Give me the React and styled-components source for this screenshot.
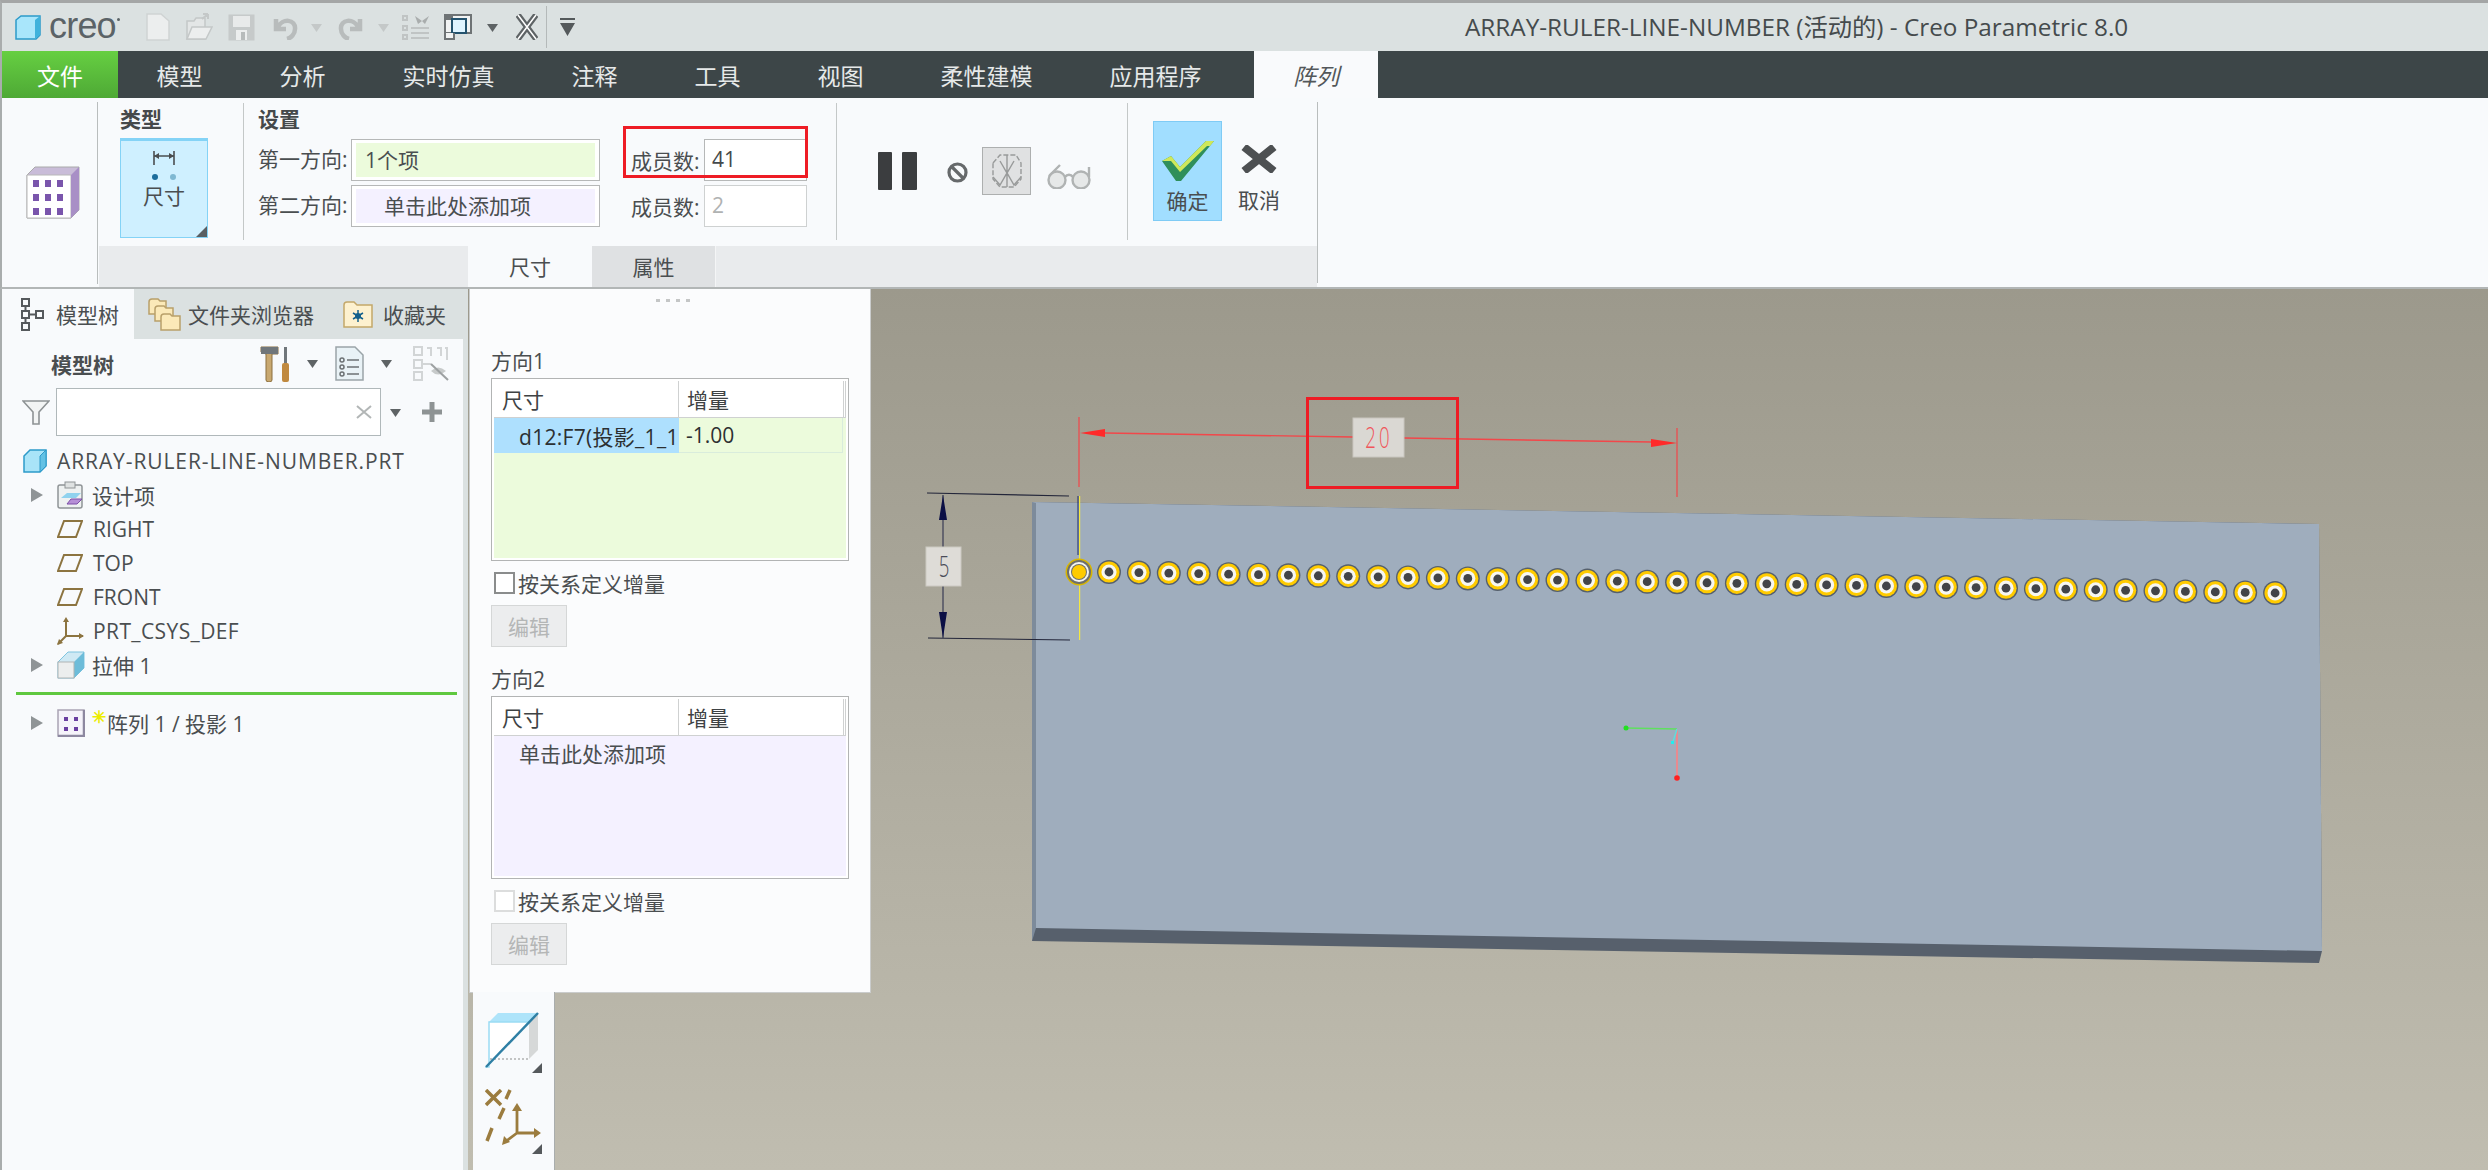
import React from 'react'
import styled, { createGlobalStyle } from 'styled-components'

const FONT = `"Open Sans", "Noto Sans CJK SC", sans-serif`

const GlobalStyle = createGlobalStyle`
  html, body {
    margin: 0;
    padding: 0;
    background: #f7f9fb;
  }
  * {
    box-sizing: border-box;
  }
`

const Page = styled.div`
  width: 2488px;
  height: 1170px;
  overflow: hidden;
  display: flex;
  flex-direction: column;
  font-family: ${FONT};
  color: #4a4e50;
`

/* Barre de titre */
const TitleBar = styled.div`
  height: 51px;
  flex: none;
  display: flex;
  align-items: center;
  background: #dbe1e1;
  border-top: 3px solid #a4a6a6;
  border-left: 2px solid #a9adad;
  position: relative;
`

const Logo = styled.div`
  display: flex;
  align-items: center;
  margin-left: 13px;
  width: 128px;
  flex: none;
`

const LogoText = styled.span`
  font-family: 'Liberation Sans', sans-serif;
  font-size: 36px;
  letter-spacing: -0.8px;
  line-height: 1;
  margin-left: 8px;
  margin-top: -3px;
  color: #5b6367;
`

const LogoMark = styled.span`
  width: 3px;
  height: 3px;
  margin: -16px 0 0 1px;
  border-radius: 50%;
  background: #5b6367;
  flex: none;
`

const QatIcon = styled.svg`
  flex: none;
  margin-left: ${(p) => p.$gap}px;
`

const QatDivider = styled.div`
  width: 1px;
  height: 42px;
  margin-left: 8px;
  background: #b4b9b9;
  flex: none;
`

const WindowTitle = styled.div`
  position: absolute;
  left: 1463px;
  top: 6px;
  font-size: 24.3px;
  line-height: 36px;
  white-space: nowrap;
  color: #454b4d;
`

/* Menu principal */
const MenuBar = styled.div`
  height: 47px;
  flex: none;
  display: flex;
  background: #3d4648;
  border-left: 2px solid #a9adad;
`

const FileTab = styled.div`
  width: 116px;
  display: flex;
  align-items: center;
  justify-content: center;
  font-size: 23px;
  color: #fff;
  background: linear-gradient(#66cf42, #4ea935);
`

const MenuItem = styled.div`
  padding: 0 38.5px;
  display: flex;
  align-items: center;
  font-size: 23px;
  color: #e6e9e9;
`

const ActiveMenuItem = styled.div`
  width: 124px;
  margin-left: 14px;
  display: flex;
  align-items: center;
  justify-content: center;
  font-size: 23px;
  font-style: italic;
  color: #53575a;
  background: #f9fafc;
`

/* Ruban */
const Ribbon = styled.div`
  height: 191px;
  flex: none;
  display: flex;
  position: relative;
  background: #f8fafc;
  border-left: 2px solid #a9adad;
  border-bottom: 2px solid #b2b6b6;
`

const RibbonIconCell = styled.div`
  width: 97px;
  flex: none;
  display: flex;
  align-items: center;
  justify-content: center;
  padding-left: 4px;
  position: relative;
  &::after {
    content: '';
    position: absolute;
    right: 1px;
    top: 4px;
    bottom: 3px;
    width: 1px;
    background: #b9bdbd;
  }
`

const RibbonBody = styled.div`
  width: 1219px;
  flex: none;
  display: flex;
  flex-direction: column;
  position: relative;
  &::after {
    content: '';
    position: absolute;
    right: 0;
    top: 4px;
    bottom: 4px;
    width: 1px;
    background: #b9bdbd;
  }
`

const RibbonGroups = styled.div`
  height: 148px;
  display: flex;
`

const RibbonGroup = styled.div`
  width: ${(p) => p.$width}px;
  flex: none;
  padding: 9px 0 0 ${(p) => p.$pad}px;
  position: relative;
  display: ${(p) => (p.$row ? 'flex' : 'block')};
  &::after {
    content: '';
    display: ${(p) => (p.$noLine ? 'none' : 'block')};
    position: absolute;
    right: 0;
    top: 5px;
    bottom: 6px;
    width: 1px;
    background: #c4c8c8;
  }
`

const GroupTitle = styled.div`
  font-size: 21px;
  font-weight: 700;
  line-height: 24px;
  margin-bottom: 8px;
  color: #45494b;
`

const TypeButton = styled.div`
  width: 88px;
  height: 100px;
  margin-top: -1px;
  background: #cff0ff;
  border: 1px solid #84d3f6;
  border-top: 3px solid #84d3f6;
  position: relative;
  display: flex;
  flex-direction: column;
  align-items: center;
  padding-top: 7px;
  font-size: 21px;
  line-height: 24px;
  &::after {
    content: '';
    position: absolute;
    right: 0;
    bottom: 0;
    border-style: solid;
    border-width: 0 0 11px 11px;
    border-color: transparent transparent #5a5f62 transparent;
  }
`

const SettingsGrid = styled.div`
  display: grid;
  grid-template-columns: 93px 249px 31px 73px 103px;
  grid-template-rows: 42px 42px;
  row-gap: 4px;
  align-items: center;
`

const FieldLabel = styled.div`
  font-size: 21px;
  line-height: 28px;
  padding-bottom: 2px;
  white-space: nowrap;
  grid-column: ${(p) => p.$col};
  margin-top: ${(p) => (p.$col === 4 ? 3 : 0)}px;
`

const ColorField = styled.div`
  grid-column: 2;
  width: 249px;
  height: 42px;
  padding: 3px 4px;
  background: #fff;
  border: 1px solid #b6b8b8;
`

const ColorFieldInner = styled.div`
  height: 100%;
  padding-left: ${(p) => p.$pad}px;
  padding-bottom: 2px;
  display: flex;
  align-items: center;
  font-size: 21px;
  background: ${(p) => p.$bg};
`

const CountField = styled.div`
  grid-column: 5;
  width: 103px;
  height: 42px;
  padding-left: 7px;
  padding-bottom: 2px;
  display: flex;
  align-items: center;
  font-size: 21px;
  background: #fff;
  color: ${(p) => (p.$disabled ? '#b0b2b2' : '#45494b')};
  border: 1px solid ${(p) => (p.$disabled ? '#ced1d1' : '#b6b8b8')};
`

const ToggleButton = styled.div`
  width: 49px;
  height: 48px;
  margin-top: 40px;
  margin-left: 14px;
  background: #e0e1e2;
  border: 1px solid #adafaf;
  display: flex;
  align-items: center;
  justify-content: center;
  flex: none;
`

const ActionIcon = styled.svg`
  flex: none;
  margin-top: ${(p) => p.$top}px;
  margin-left: ${(p) => p.$left}px;
`

const ConfirmButton = styled.div`
  width: ${(p) => p.$width}px;
  height: 100px;
  margin-top: 14px;
  margin-left: ${(p) => p.$left}px;
  background: ${(p) => (p.$active ? '#a1deff' : 'transparent')};
  border: 1px solid ${(p) => (p.$active ? '#7fcbf5' : 'transparent')};
  display: flex;
  flex-direction: column;
  align-items: center;
  font-size: 21px;
  line-height: 26px;
  flex: none;
`

const ConfirmIcon = styled.svg`
  margin-top: ${(p) => p.$top}px;
  margin-bottom: ${(p) => p.$bottom}px;
  flex: none;
`

const RibbonTabs = styled.div`
  height: 41px;
  margin-right: 1px;
  padding-left: 369px;
  display: flex;
  background: #e9ebed;
`

const RibbonTab = styled.div`
  width: 124px;
  padding-bottom: 2px;
  display: flex;
  align-items: center;
  justify-content: center;
  font-size: 21px;
  background: ${(p) => (p.$active ? '#f8fafc' : '#dfe1e3')};
  border-right: ${(p) => (p.$active ? 'none' : '1px solid #f4f5f6')};
`

const Highlight = styled.div`
  position: absolute;
  left: 621px;
  top: 28px;
  width: 185px;
  height: 52px;
  border: 3px solid #ee1c25;
  pointer-events: none;
`

/* Espace de travail */
const Workspace = styled.div`
  flex: 1;
  display: flex;
  position: relative;
  min-height: 0;
`

const Sidebar = styled.div`
  width: 463px;
  flex: none;
  display: flex;
  flex-direction: column;
  background: #f8fafc;
  border-left: 2px solid #a9adad;
`

const SideTabs = styled.div`
  height: 50px;
  flex: none;
  display: flex;
  align-items: center;
  background: #dbe1e1;
`

const SideTab = styled.div`
  height: 100%;
  width: ${(p) => p.$width}px;
  flex: none;
  display: flex;
  align-items: center;
  padding-left: ${(p) => p.$pad}px;
  gap: ${(p) => p.$gap}px;
  font-size: 21px;
  background: ${(p) => (p.$active ? '#f8fafc' : 'transparent')};
`

const TreeHeader = styled.div`
  height: 49px;
  flex: none;
  display: flex;
  align-items: center;
  padding-left: 49px;
`

const TreeTitle = styled.div`
  width: 209px;
  font-size: 21px;
  font-weight: 700;
  flex: none;
`

const HeaderIcon = styled.svg`
  flex: none;
  margin-left: ${(p) => p.$left}px;
`

const FilterRow = styled.div`
  height: 48px;
  flex: none;
  display: flex;
  align-items: center;
  padding-left: 20px;
`

const FilterInput = styled.div`
  width: 325px;
  height: 48px;
  margin-left: 6px;
  padding-right: 8px;
  display: flex;
  align-items: center;
  justify-content: flex-end;
  background: #fff;
  border: 1px solid #b0b8ba;
  flex: none;
`

const TreeList = styled.div`
  padding-top: 8px;
  display: flex;
  flex-direction: column;
`

const TreeRow = styled.div`
  height: 34px;
  display: flex;
  align-items: center;
  padding-left: ${(p) => p.$indent}px;
  font-size: 21px;
  letter-spacing: ${(p) => p.$spacing || 0}px;
  white-space: nowrap;
`

const TreeArrow = styled.div`
  width: 0;
  height: 0;
  flex: none;
  border-style: solid;
  border-width: 7px 0 7px 12px;
  border-color: transparent transparent transparent #8f9496;
  margin-right: 14px;
`

const TreeIcon = styled.svg`
  flex: none;
  margin-right: ${(p) => p.$gap}px;
`

const NewMark = styled.span`
  color: #ecec00;
  font-size: 17px;
  font-weight: 700;
  width: 15px;
  margin-top: -14px;
  flex: none;
`

const InsertLine = styled.div`
  height: 3px;
  margin: 10px 6px 11px 14px;
  flex: none;
  background: #5fc83f;
`

const Gutter = styled.div`
  width: 5px;
  flex: none;
  background: #dbe1e1;
`

const Canvas = styled.div`
  flex: 1;
  position: relative;
  overflow: hidden;
  background: linear-gradient(#9c998c, #c0bdb0);
`

const Scene = styled.svg`
  display: block;
  width: 2020px;
  height: 881px;
`

const SceneText = styled.text`
  font-family: 'Open Sans', sans-serif;
  font-size: 30px;
  font-weight: 300;
  text-anchor: middle;
`

/* Panneau déroulant */
const Popup = styled.div`
  position: absolute;
  left: 1px;
  top: 0;
  width: 402px;
  height: 704px;
  padding: 62px 0 0 21px;
  background: #fbfcfd;
  border: 1px solid #cacccc;
  border-top: none;
`

const Grip = styled.div`
  position: absolute;
  left: 186px;
  top: 10px;
  display: flex;
  gap: 6px;
`

const GripDot = styled.span`
  width: 4px;
  height: 3px;
  background: #c4c6c6;
`

const SectionTitle = styled.div`
  height: 27px;
  font-size: 21px;
  line-height: 20px;
`

const DirTable = styled.div`
  width: 358px;
  height: 183px;
  padding: 2px;
  background: #fff;
  border: 1px solid #b2b4b4;
  display: flex;
  flex-direction: column;
`

const DirHeader = styled.div`
  height: 37px;
  flex: none;
  display: grid;
  grid-template-columns: 185px 1fr;
  background: #fff;
  border-bottom: 1px solid #cfd1d1;
  border-right: 3px double #cfd1d1;
`

const DirHeaderCell = styled.div`
  padding-left: ${(p) => p.$pad}px;
  display: flex;
  align-items: center;
  font-size: 21px;
  color: #3e4244;
  border-right: ${(p) => (p.$line ? '1px solid #cfd1d1' : 'none')};
`

const DirBody = styled.div`
  flex: 1;
  background: ${(p) => p.$bg};
`

const DirRow = styled.div`
  height: 35px;
  display: grid;
  grid-template-columns: 185px 164px;
  font-size: 21px;
`

const SelectedCell = styled.div`
  padding-left: 25px;
  display: flex;
  align-items: center;
  overflow: hidden;
  white-space: nowrap;
  letter-spacing: 0.3px;
  background: #aee0fe;
  color: #2c3032;
`

const ValueCell = styled.div`
  padding-left: 7px;
  display: flex;
  align-items: center;
  color: #2c3032;
  border-bottom: 1px solid #d9ecdc;
  border-right: 1px solid #d9ecdc;
`

const HintRow = styled.div`
  padding: 3px 0 0 25px;
  font-size: 21px;
  line-height: 30px;
`

const CheckRow = styled.div`
  height: 22px;
  margin: 11px 0 11px 3px;
  display: flex;
  align-items: center;
  gap: 3px;
  font-size: 21px;
`

const CheckBox = styled.div`
  width: 21px;
  height: 22px;
  background: #fff;
  border: 2px solid ${(p) => (p.$disabled ? '#dcdddd' : '#8a8c8c')};
`

const EditButton = styled.div`
  width: 76px;
  height: 42px;
  margin-bottom: 22px;
  display: flex;
  align-items: center;
  justify-content: center;
  font-size: 21px;
  color: #b4b6b6;
  background: #ecedee;
  border: 1px solid #d5d7d7;
`

/* Barre d'outils verticale */
const ViewToolbar = styled.div`
  position: absolute;
  left: 5px;
  top: 703px;
  width: 82px;
  height: 178px;
  background: #f8fafc;
  border-right: 1px solid #a9adad;
  display: flex;
  flex-direction: column;
  align-items: flex-start;
  padding-left: 12px;
`

const ToolbarIcon = styled.svg`
  flex: none;
  margin-top: ${(p) => p.$top}px;
`

const Corner = styled.div`
  position: relative;
`

const CornerMark = styled.div`
  position: absolute;
  right: -1px;
  bottom: 0;
  border-style: solid;
  border-width: 0 0 10px 10px;
  border-color: transparent transparent #55595c transparent;
`

const MENU_ITEMS = ['模型', '分析', '实时仿真', '注释', '工具', '视图', '柔性建模', '应用程序']

function DropArrow({ gap, color = '#5e6365', w = 11 }) {
  return (
    <QatIcon $gap={gap} width={w} height="9" viewBox="0 0 11 9">
      <path d="M0 1 H11 L5.5 9 Z" fill={color} />
    </QatIcon>
  )
}

function QuickAccess() {
  return (
    <>
      <QatIcon $gap={3} width="24" height="28" viewBox="0 0 24 28">
        <path d="M1 1 H15 L23 8 V27 H1 Z" fill="#eceeee" stroke="#cfd3d3" strokeWidth="1.5" />
      </QatIcon>
      <QatIcon $gap={15} width="28" height="28" viewBox="0 0 28 28">
        <path d="M2 26 L2 8 H9 L11 5 H20 V26 Z" fill="#e3e6e6" stroke="#c4c8c8" strokeWidth="1.5" />
        <path d="M2 26 L7 14 H27 L21 26 Z" fill="#eceeee" stroke="#c4c8c8" strokeWidth="1.5" />
        <path d="M17 6 L23 1 M23 1 V6 M23 1 H18" stroke="#c4c8c8" strokeWidth="2" fill="none" />
      </QatIcon>
      <QatIcon $gap={15} width="27" height="27" viewBox="0 0 27 27">
        <rect x="0.5" y="0.5" width="26" height="26" fill="#c6caca" />
        <rect x="5" y="2" width="17" height="11" fill="#e8eaea" />
        <rect x="8" y="16" width="11" height="10" fill="#eceeee" />
        <rect x="13" y="18" width="4" height="8" fill="#b7bbbb" />
      </QatIcon>
      <QatIcon $gap={15} width="28" height="26" viewBox="0 0 28 26">
        <path d="M6 5 V15 H16 M8 13 C12 4 26 5 25 15 C25 20 21 24 17 25" fill="none" stroke="#b8bcbc" strokeWidth="4.5" />
      </QatIcon>
      <DropArrow gap={13} color="#c4c8c8" />
      <QatIcon $gap={16} width="28" height="26" viewBox="0 0 28 26">
        <path d="M22 5 V15 H12 M20 13 C16 4 2 5 3 15 C3 20 7 24 11 25" fill="none" stroke="#b8bcbc" strokeWidth="4.5" />
      </QatIcon>
      <DropArrow gap={12} color="#c4c8c8" />
      <QatIcon $gap={13} width="27" height="28" viewBox="0 0 27 28">
        <g fill="none" stroke="#c0c4c4" strokeWidth="2">
          <rect x="1" y="3" width="4" height="4" />
          <rect x="1" y="13" width="4" height="4" />
          <rect x="1" y="22" width="4" height="4" />
          <path d="M9 15 H27 M9 20 H27 M9 25 H27" />
        </g>
        <path d="M13 3 L20 8 L16 11 Z M27 3 L20 8 L23 11 Z" fill="#a9adad" />
      </QatIcon>
      <QatIcon $gap={15} width="28" height="26" viewBox="0 0 28 26">
        <path d="M1 1 H27 V19 H1 Z" fill="#f1f3f3" stroke="#6e7375" strokeWidth="2" />
        <rect x="1" y="1" width="8" height="5" fill="#6e7375" />
        <rect x="8" y="5" width="14" height="14" fill="#dff4ff" stroke="#24536e" strokeWidth="2" />
        <path d="M1 19 V25 H10 V19" fill="#f1f3f3" stroke="#6e7375" strokeWidth="2" />
      </QatIcon>
      <DropArrow gap={15} />
      <QatIcon $gap={18} width="22" height="26" viewBox="0 0 22 26">
        <path d="M2 1 L20 25 M20 1 L2 25" stroke="#5e6365" strokeWidth="6" />
        <path d="M2 1 L20 25 M20 1 L2 25" stroke="#fff" strokeWidth="1.5" />
      </QatIcon>
      <QatDivider />
      <QatIcon $gap={13} width="15" height="18" viewBox="0 0 15 18">
        <path d="M0 0 H15 V2 H0 Z M0 5 H15 L7.5 18 Z" fill="#54595b" />
      </QatIcon>
    </>
  )
}

function PartIcon({ size = 24, gap = 10 }) {
  return (
    <TreeIcon $gap={gap} width={size} height={size} viewBox="0 0 24 24">
      <path d="M1 7 L7 1 H23 V17 L17 23 H1 Z" fill="#a9e4f8" stroke="#2d9ac9" strokeWidth="1.5" />
      <path d="M17 7 L23 1 V17 L17 23 Z" fill="#63c1e4" stroke="#2d9ac9" strokeWidth="1" />
    </TreeIcon>
  )
}

function PlaneIcon() {
  return (
    <TreeIcon $gap={10} width="26" height="18" viewBox="0 0 26 18">
      <path d="M7 1 H25 L19 17 H1 Z" fill="none" stroke="#8c7440" strokeWidth="2" />
    </TreeIcon>
  )
}

function CsysIcon() {
  return (
    <TreeIcon $gap={9} width="27" height="28" viewBox="0 0 27 28">
      <path d="M9 2 V19 H26 M9 19 L1 27" fill="none" stroke="#8c7440" strokeWidth="2" />
      <path d="M9 0 L12 5 H6 Z M27 19 L22 16 V22 Z M0 28 L2 22 L6 26 Z" fill="#8c7440" />
    </TreeIcon>
  )
}

function ModelTree() {
  return (
    <TreeList>
      <TreeRow $indent={21} $spacing={0.9}>
        <PartIcon />
        ARRAY-RULER-LINE-NUMBER.PRT
      </TreeRow>
      <TreeRow $indent={29}>
        <TreeArrow />
        <TreeIcon $gap={8} width="27" height="28" viewBox="0 0 27 28">
          <rect x="1" y="4" width="24" height="23" rx="2" fill="#eef1f1" stroke="#8f9496" strokeWidth="1.5" />
          <rect x="8" y="1" width="10" height="6" fill="#dfe2e2" stroke="#8f9496" />
          <path d="M4 17 L10 12 H24 L19 17 Z" fill="#8fd2ee" />
          <path d="M10 23 L14 18 H25 L20 23 Z" fill="#b68fd6" stroke="#7d4fa8" />
        </TreeIcon>
        设计项
      </TreeRow>
      <TreeRow $indent={55}>
        <PlaneIcon />
        RIGHT
      </TreeRow>
      <TreeRow $indent={55}>
        <PlaneIcon />
        TOP
      </TreeRow>
      <TreeRow $indent={55}>
        <PlaneIcon />
        FRONT
      </TreeRow>
      <TreeRow $indent={55} $spacing={0.4}>
        <CsysIcon />
        PRT_CSYS_DEF
      </TreeRow>
      <TreeRow $indent={29}>
        <TreeArrow />
        <TreeIcon $gap={7} width="28" height="28" viewBox="0 0 28 28">
          <path d="M1 11 L11 1 H27 V17 L17 27 H1 Z" fill="#cfe9f4" stroke="#7fc4df" />
          <path d="M17 11 L27 1 V17 L17 27 Z" fill="#6dbcd9" />
          <rect x="1" y="11" width="16" height="16" fill="#eceeee" stroke="#b0b4b4" />
        </TreeIcon>
        拉伸 1
      </TreeRow>
      <InsertLine />
      <TreeRow $indent={29}>
        <TreeArrow />
        <TreeIcon $gap={7} width="28" height="28" viewBox="0 0 28 28">
          <rect x="1" y="1" width="26" height="26" fill="#f5f3fa" stroke="#a9a4b4" strokeWidth="1.5" />
          <path d="M27 1 V27 H1" fill="none" stroke="#8d88a0" strokeWidth="2.5" />
          <path d="M7 8 h4 v4 h-4 Z M17 8 h4 v4 h-4 Z M7 18 h4 v4 h-4 Z M17 18 h4 v4 h-4 Z" fill="#6a3fa0" />
        </TreeIcon>
        <NewMark>✳</NewMark>
        阵列 1 / 投影 1
      </TreeRow>
    </TreeList>
  )
}

function Holes() {
  const holes = []
  for (let i = 0; i < 40; i++) {
    const x = 1109 + i * 29.9
    const y = 572 + (x - 1109) * 0.018
    holes.push(
      <g key={i}>
        <circle cx={x} cy={y} r="12" fill="#56606c" />
        <circle cx={x} cy={y} r="10.6" fill="#ffcb00" />
        <circle cx={x} cy={y} r="7.6" fill="#f6f6f2" />
        <circle cx={x} cy={y} r="4.4" fill="#424448" />
      </g>,
    )
  }
  return holes
}

function ModelScene() {
  return (
    <Scene viewBox="468 289 2020 881">
      {/* Plaque */}
      <path d="M1032 502 L2319 524 L2322 951 L2319 963 L1032 941 Z" fill="#57606c" />
      <path d="M1032 502 L2319 524 L2322 951 L1036 928 Z" fill="#9fadbd" />
      <path d="M1032 502 L1036 503 L1036 928 L1032 941 Z" fill="#7d8b9b" />

      {/* Cote 5 */}
      <g stroke="#23263a" strokeWidth="1.2" fill="none">
        <path d="M927 493 L1069 496 M928 638 L1070 640" />
        <path d="M943 495 V547 M943 586 V638" stroke="#3a3d55" />
      </g>
      <path d="M943 495 L947 520 H939 Z M943 638 L947 612 H939 Z" fill="#0b0f45" />
      <rect x="926" y="547" width="35" height="39" fill="#dedcd7" stroke="#ccc9c2" />
      <SceneText transform="translate(944 577) scale(0.62 1)" fill="#4a4c58">5</SceneText>

      {/* Cote 20 */}
      <path d="M1079 417 V487 M1677 428 V497" stroke="#f2474a" strokeWidth="1.2" />
      <path d="M1105 433 L1353 437 M1404 438 L1651 442" stroke="#f2474a" strokeWidth="1.4" />
      <path d="M1080 433 L1105 429 V437 Z M1677 443 L1651 439 V447 Z" fill="#ff2a2a" />
      <rect x="1353" y="418" width="51" height="39" fill="#dad8d3" stroke="#c9c6bf" />
      <SceneText transform="translate(1379 448) scale(0.62 1)" fill="#f0555a" letterSpacing="5">20</SceneText>
      <rect x="1307.5" y="398.5" width="150" height="89" fill="none" stroke="#ee1c25" strokeWidth="3" />

      {/* Trous */}
      <path d="M1079.6 496 V640" stroke="#f5e840" strokeWidth="1.2" />
      <path d="M1078 496 V555" stroke="#1a2a6a" strokeWidth="1" />
      <circle cx="1079" cy="572" r="13.5" fill="#d8b600" />
      <circle cx="1079" cy="572" r="12" fill="#6d6f6c" />
      <circle cx="1079" cy="572" r="10" fill="#f4f4f0" />
      <circle cx="1079" cy="572" r="8" fill="#6d6f6c" />
      <circle cx="1079" cy="572" r="7" fill="#ffcb00" />
      <Holes />

      {/* Origine */}
      <path d="M1626 728 L1677 729" stroke="#5fe05f" strokeWidth="1.5" />
      <path d="M1677 729 V778" stroke="#e88a90" strokeWidth="2" />
      <path d="M1677 729 L1672.6 743" stroke="#5fdcdc" strokeWidth="1.5" />
      <circle cx="1626" cy="728" r="2.5" fill="#22e022" />
      <circle cx="1677" cy="778" r="2.8" fill="#ff2020" />
      <rect x="1671" y="741" width="3" height="3" fill="#22eeee" />
    </Scene>
  )
}

function DirectionSection({ title, bg, disabled, children }) {
  return (
    <>
      <SectionTitle>{title}</SectionTitle>
      <DirTable>
        <DirHeader>
          <DirHeaderCell $pad={8} $line>
            尺寸
          </DirHeaderCell>
          <DirHeaderCell $pad={8}>增量</DirHeaderCell>
        </DirHeader>
        <DirBody $bg={bg}>{children}</DirBody>
      </DirTable>
      <CheckRow>
        <CheckBox $disabled={disabled} />
        按关系定义增量
      </CheckRow>
      <EditButton>编辑</EditButton>
    </>
  )
}

export default function App() {
  return (
    <Page>
      <GlobalStyle />
      <TitleBar>
        <Logo>
          <svg width="26" height="25" viewBox="0 0 26 25">
            <path d="M1 5 L6 1 H25 V20 L21 24 H1 Z" fill="#a9e6fb" stroke="#2d9ac9" strokeWidth="1.5" />
            <path d="M20 5 L25 1 V20 L20 24 Z" fill="#3fb2dc" />
          </svg>
          <LogoText>creo</LogoText>
          <LogoMark />
        </Logo>
        <QuickAccess />
        <WindowTitle>ARRAY-RULER-LINE-NUMBER (活动的) - Creo Parametric 8.0</WindowTitle>
      </TitleBar>

      <MenuBar>
        <FileTab>文件</FileTab>
        {MENU_ITEMS.map((item) => (
          <MenuItem key={item}>{item}</MenuItem>
        ))}
        <ActiveMenuItem>阵列</ActiveMenuItem>
      </MenuBar>

      <Ribbon>
        <RibbonIconCell>
          <svg width="54" height="53" viewBox="0 0 54 53">
            <path d="M1 9 L9 1 H53 V44 L45 52 H1 Z" fill="#c9bcd8" stroke="#aaa" />
            <path d="M1 9 H45 V52 H1 Z" fill="#fff" stroke="#b8b8b8" />
            <path d="M45 9 L53 1 V44 L45 52 Z" fill="#a88fc6" />
            {[14, 28, 42].map((y) =>
              [7, 19, 31].map((x) => <rect key={`${x}-${y}`} x={x} y={y} width="6" height="7" fill="#7a55ac" />),
            )}
          </svg>
        </RibbonIconCell>
        <RibbonBody>
          <RibbonGroups>
            <RibbonGroup $width={145} $pad={21}>
              <GroupTitle>类型</GroupTitle>
              <TypeButton>
                <svg width="24" height="36" viewBox="0 0 24 36">
                  <path d="M2 3 V17 M22 3 V17 M2 8 H22" stroke="#4a4e50" strokeWidth="1.6" fill="none" />
                  <path d="M2 8 L7 5 V11 Z M22 8 L17 5 V11 Z" fill="#4a4e50" />
                  <circle cx="3" cy="29" r="3" fill="#1c6d9c" />
                  <circle cx="21" cy="29" r="3" fill="#7fb8d2" />
                </svg>
                尺寸
              </TypeButton>
            </RibbonGroup>
            <RibbonGroup $width={593} $pad={14}>
              <GroupTitle>设置</GroupTitle>
              <SettingsGrid>
                <FieldLabel $col={1}>第一方向:</FieldLabel>
                <ColorField>
                  <ColorFieldInner $bg="#ecfbdc" $pad={9}>
                    1个项
                  </ColorFieldInner>
                </ColorField>
                <FieldLabel $col={4}>成员数:</FieldLabel>
                <CountField>41</CountField>
                <FieldLabel $col={1}>第二方向:</FieldLabel>
                <ColorField>
                  <ColorFieldInner $bg="#f4f1ff" $pad={28}>
                    单击此处添加项
                  </ColorFieldInner>
                </ColorField>
                <FieldLabel $col={4}>成员数:</FieldLabel>
                <CountField $disabled>2</CountField>
              </SettingsGrid>
            </RibbonGroup>
            <RibbonGroup $width={291} $pad={0} $row>
              <ActionIcon $top={45} $left={41} width="39" height="38" viewBox="0 0 39 38">
                <rect x="0" y="0" width="14" height="38" rx="1" fill="#3b3d3f" />
                <rect x="24" y="0" width="15" height="38" rx="1" fill="#3b3d3f" />
              </ActionIcon>
              <ActionIcon $top={55} $left={30} width="21" height="21" viewBox="0 0 21 21">
                <circle cx="10.5" cy="10.5" r="8.5" fill="none" stroke="#66696b" strokeWidth="3.2" />
                <path d="M4.5 4.5 L16.5 16.5" stroke="#66696b" strokeWidth="3.2" />
              </ActionIcon>
              <ToggleButton>
                <svg width="34" height="36" viewBox="0 0 34 36">
                  <g fill="none" stroke="#989a9a" strokeWidth="1.4">
                    <path d="M3 10 L10 2 H26 L31 10 V26 L24 34 H10 L3 26 Z" strokeDasharray="5 2" />
                    <path d="M3 24 L10 32 L17 20 L24 32 L31 24 M10 8 L17 20 L24 8 M17 2 V34" />
                  </g>
                </svg>
              </ToggleButton>
              <ActionIcon $top={56} $left={15} width="46" height="26" viewBox="0 0 46 26">
                <g fill="#e6e8e8" stroke="#b0b3b3" strokeWidth="2.4">
                  <circle cx="11" cy="17" r="8.5" />
                  <circle cx="35" cy="17" r="8.5" />
                </g>
                <path d="M19 14 C21 11 25 11 27 14 M3 13 L14 2 M43 14 V4" fill="none" stroke="#b0b3b3" strokeWidth="2.4" />
              </ActionIcon>
            </RibbonGroup>
            <RibbonGroup $width={190} $pad={0} $row $noLine>
              <ConfirmButton $width={69} $left={25} $active>
                <ConfirmIcon $top={19} $bottom={7} width="52" height="40" viewBox="0 0 52 40">
                  <path d="M0 20 L9 15 L18 26 L44 0 H52 L19 40 H14 Z" fill="#2f8f5b" />
                  <path d="M0 20 L9 15 L18 26 L44 0 H52 L48 5 H45 L18 31 L9 20 Z" fill="#cfe85a" />
                </ConfirmIcon>
                确定
              </ConfirmButton>
              <ConfirmButton $width={60} $left={7}>
                <ConfirmIcon $top={23} $bottom={14} width="36" height="28" viewBox="0 0 36 28">
                  <path d="M3 2 L33 26 M33 2 L3 26" stroke="#4d5052" strokeWidth="8" />
                </ConfirmIcon>
                取消
              </ConfirmButton>
            </RibbonGroup>
          </RibbonGroups>
          <RibbonTabs>
            <RibbonTab $active>尺寸</RibbonTab>
            <RibbonTab>属性</RibbonTab>
          </RibbonTabs>
        </RibbonBody>
        <Highlight />
      </Ribbon>

      <Workspace>
        <Sidebar>
          <SideTabs>
            <SideTab $active $width={132} $pad={19} $gap={12}>
              <svg width="23" height="33" viewBox="0 0 23 33">
                <g fill="none" stroke="#55595c" strokeWidth="2">
                  <rect x="1" y="1" width="7" height="7" />
                  <rect x="1" y="13" width="7" height="7" />
                  <rect x="15" y="13" width="7" height="7" />
                  <rect x="1" y="25" width="7" height="7" />
                  <path d="M4.5 8 V13 M4.5 20 V25 M8 16.5 H15" />
                </g>
              </svg>
              模型树
            </SideTab>
            <SideTab $width={196} $pad={14} $gap={7}>
              <svg width="33" height="33" viewBox="0 0 33 33">
                <g fill="#fbe9b8" stroke="#b9a06a" strokeWidth="1.5">
                  <path d="M1 4 Q1 1 4 1 H10 L12 3 H18 V16 H1 Z" />
                  <path d="M7 11 Q7 8 10 8 H16 L18 10 H25 V23 H7 Z" />
                  <path d="M13 19 Q13 16 16 16 H22 L24 18 H32 V32 H13 Z" />
                </g>
              </svg>
              文件夹浏览器
            </SideTab>
            <SideTab $width={133} $pad={13} $gap={10}>
              <svg width="30" height="27" viewBox="0 0 30 27">
                <path d="M1 4 Q1 1 4 1 H11 L14 4 H29 V26 H1 Z" fill="#fdf1cf" stroke="#c4a86a" strokeWidth="1.5" />
                <circle cx="15" cy="15" r="3" fill="#13608c" />
                <path d="M15 9 V21 M10 12 L20 18 M20 12 L10 18" stroke="#13608c" strokeWidth="1.5" />
              </svg>
              收藏夹
            </SideTab>
          </SideTabs>
          <TreeHeader>
            <TreeTitle>模型树</TreeTitle>
            <HeaderIcon $left={0} width="30" height="36" viewBox="0 0 30 36">
              <path d="M1 1 H18 V8 H12 V34 Q12 36 9 36 Q6 36 6 34 V8 L1 6 Z" fill="#c8a870" stroke="#8b6f3e" />
              <path d="M1 1 H18 V8 H1 Z" fill="#70767a" />
              <rect x="24" y="1" width="3" height="16" fill="#70767a" />
              <rect x="22" y="17" width="7" height="19" rx="2" fill="#c0893f" />
            </HeaderIcon>
            <DropArrow gap={16} w={13} />
            <HeaderIcon $left={16} width="29" height="35" viewBox="0 0 29 35">
              <path d="M1 1 H20 L28 9 V34 H1 Z" fill="#e9f2f6" stroke="#9aa4a8" strokeWidth="1.5" />
              <g stroke="#6c7174" strokeWidth="1.5" fill="none">
                <circle cx="7" cy="14" r="2" />
                <circle cx="7" cy="21" r="2" />
                <circle cx="7" cy="28" r="2" />
                <path d="M12 14 H24 M12 21 H24 M12 28 H24" />
              </g>
            </HeaderIcon>
            <DropArrow gap={16} w={13} />
            <HeaderIcon $left={20} width="36" height="35" viewBox="0 0 36 35">
              <g fill="none" stroke="#d2d5d6" strokeWidth="2">
                <rect x="1" y="1" width="8" height="8" />
                <rect x="1" y="14" width="8" height="8" />
                <rect x="1" y="26" width="8" height="8" />
                <path d="M14 2 H18 V10 M24 2 H28 V10 M32 2 H34 V14 M9 18 H18" />
              </g>
              <path d="M18 25 Q25 18 33 25 Q25 32 18 25 Z" fill="#c7caca" />
              <path d="M18 18 L35 34" stroke="#9da1a2" strokeWidth="2" />
            </HeaderIcon>
          </TreeHeader>
          <FilterRow>
            <svg width="28" height="25" viewBox="0 0 28 25">
              <path d="M1 1 H27 L17 12 V24 H11 V12 Z" fill="#f2f4f4" stroke="#8d9294" strokeWidth="1.6" />
            </svg>
            <FilterInput>
              <svg width="16" height="14" viewBox="0 0 16 14">
                <path d="M1 1 L15 13 M15 1 L1 13" stroke="#b2b6b6" strokeWidth="2" />
              </svg>
            </FilterInput>
            <DropArrow gap={8} w={13} />
            <HeaderIcon $left={20} width="20" height="20" viewBox="0 0 20 20">
              <path d="M10 0 V20 M0 10 H20" stroke="#8e9394" strokeWidth="5" />
            </HeaderIcon>
          </FilterRow>
          <ModelTree />
        </Sidebar>
        <Gutter />
        <Canvas>
          <ModelScene />
          <Popup>
            <Grip>
              <GripDot />
              <GripDot />
              <GripDot />
              <GripDot />
            </Grip>
            <DirectionSection title="方向1" bg="#ecfbdc">
              <DirRow>
                <SelectedCell>d12:F7(投影_1_1</SelectedCell>
                <ValueCell>-1.00</ValueCell>
              </DirRow>
            </DirectionSection>
            <DirectionSection title="方向2" bg="#f4f1ff" disabled>
              <HintRow>单击此处添加项</HintRow>
            </DirectionSection>
          </Popup>
          <ViewToolbar>
            <Corner>
              <ToolbarIcon $top={20} width="56" height="56" viewBox="0 0 56 56">
                <path d="M4 10 L13 1 H53 L44 10 Z" fill="#aee4fa" />
                <path d="M4 10 H44 L1 55 H4 Z" fill="#fff" stroke="#9adcf4" strokeWidth="1.5" />
                <path d="M44 10 L53 1 V38 L44 47 Z" fill="#d6d8d8" />
                <path d="M5 47 H44" stroke="#c2c4c4" strokeWidth="2" strokeDasharray="2 2" />
                <path d="M1 55 L53 1" stroke="#2f7fa4" strokeWidth="2.4" />
              </ToolbarIcon>
              <CornerMark />
            </Corner>
            <Corner>
              <ToolbarIcon $top={16} width="56" height="60" viewBox="0 0 56 60">
                <g stroke="#9b7c3e" strokeWidth="3.5" fill="none">
                  <path d="M1 1 L16 16 M16 1 L1 16" />
                  <path d="M25 1 L21 10 M19 19 L14 30 M7 39 L2 52" />
                  <path d="M32 20 V44 H53 M32 44 L20 53" strokeWidth="2.8" />
                </g>
                <path d="M32 14 L37 22 H27 Z M56 44 L49 39 V49 Z M17 56 L19 47 L25 53 Z" fill="#9b7c3e" />
              </ToolbarIcon>
              <CornerMark />
            </Corner>
            <ToolbarIcon $top={19} width="44" height="20" viewBox="0 0 44 20">
              <path d="M6 2 H42 L34 30 H0 Z" fill="none" stroke="#9b7c3e" strokeWidth="3" />
            </ToolbarIcon>
          </ViewToolbar>
        </Canvas>
      </Workspace>
    </Page>
  )
}
